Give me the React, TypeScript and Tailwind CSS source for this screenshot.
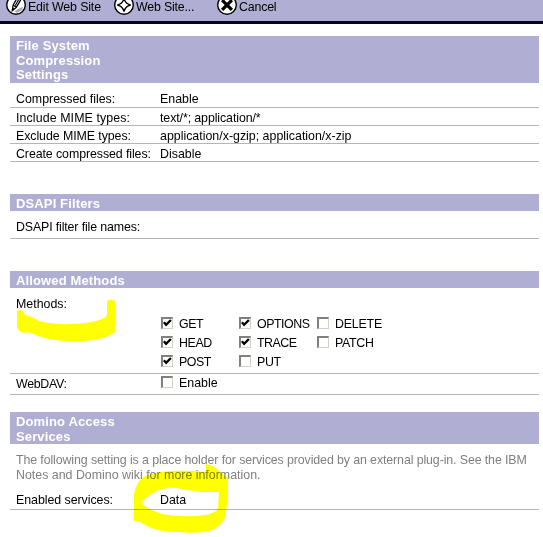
import type { ReactNode } from 'react';

function Header({ children, className }: { children: ReactNode; className: string }) {
  return (
    <div className={`bg-[#b0afd3] pl-[6px] text-[13px] leading-[14.5px] font-bold tracking-[0.13px] text-white ${className}`}>
      {children}
    </div>
  );
}

function Row({
  label,
  children,
  className = 'h-[18px] pt-[3px]',
  labelClass = '',
}: {
  label: string;
  children?: ReactNode;
  className?: string;
  labelClass?: string;
}) {
  return (
    <div className={`flex items-center border-b border-[#b5b5b5] pl-[6px] ${className}`}>
      <div className={`w-[144px] shrink-0 ${labelClass}`}>{label}</div>
      <div>{children}</div>
    </div>
  );
}

function Check({ label, on = false, className = '' }: { label: string; on?: boolean; className?: string }) {
  return (
    <div className="flex h-[19px] items-center gap-[6px]">
      <span className="mb-[3px] ml-px h-[12px] w-[12px] shrink-0 border-t-2 border-r border-b border-l-2 border-t-[#808080] border-r-[#d4d0c8] border-b-[#d4d0c8] border-l-[#808080]">
        {on && (
          <svg viewBox="0 0 9 9" className="block h-[9px] w-[9px]" fill="none">
            <path d="M.8 3.2 3.1 5.8 7.9 1" stroke="#000" strokeWidth="2.4" />
          </svg>
        )}
      </span>
      <span className={className}>{label}</span>
    </div>
  );
}

function PencilIcon() {
  return (
    <svg viewBox="0 0 22 22" className="h-[22px] w-[22px]" fill="none">
      <circle cx="11" cy="11" r="9.3" fill="#fff" stroke="#000" strokeWidth="1.4" />
      <path d="M9.5 17 18 12.5 17.2 16 12 19Z" fill="#aaa" />
      <path d="M12.5 3.5 8.2 11 7.3 16.6l4-3.2 4.4-7.6" fill="#fff" stroke="#000" strokeWidth="1.3" />
      <path d="m8.2 11 3.1 2.2M10.3 11.5l4-7M7.3 16.8l1.2-2.8" stroke="#000" strokeWidth="1.1" />
    </svg>
  );
}

function DiamondIcon() {
  return (
    <svg viewBox="0 0 22 22" className="h-[22px] w-[22px]">
      <circle cx="11" cy="11" r="9.3" fill="#fff" stroke="#000" strokeWidth="1.4" />
      <path d="M11 4.3Q12.2 9.8 17.7 11 12.2 12.2 11 17.7 9.8 12.2 4.3 11 9.8 9.8 11 4.3Z" fill="#fff" stroke="#000" strokeWidth="1.3" />
    </svg>
  );
}

function CancelIcon() {
  return (
    <svg viewBox="0 0 22 22" className="h-[22px] w-[22px]">
      <circle cx="11" cy="11" r="9.3" fill="#fff" stroke="#000" strokeWidth="1.4" />
      <path d="m6.1 6.1 9.8 9.8m0-9.8-9.8 9.8" stroke="#000" strokeWidth="3.2" />
    </svg>
  );
}

function Action({ icon, label, className, labelClass = '' }: { icon: ReactNode; label: string; className: string; labelClass?: string }) {
  return (
    <div className={`flex shrink-0 items-start gap-px ${className}`}>
      <span className="-mt-[6px] h-[22px] overflow-hidden">{icon}</span>
      <span className={`leading-[14px] ${labelClass}`}>{label}</span>
    </div>
  );
}

export default function App() {
  return (
    <div className="relative h-[537px] w-[543px] overflow-hidden bg-white font-['Liberation_Sans',Arial,sans-serif] text-[12.4px] leading-[15px] whitespace-nowrap text-black">
      <div className="flex h-[24px] overflow-hidden border-b-[3px] border-[#05051a] bg-[#b0afd3] pl-[5px]">
        <Action icon={<PencilIcon />} label="Edit Web Site" className="w-[108px]" labelClass="tracking-[-0.15px]" />
        <Action icon={<DiamondIcon />} label="Web Site..." className="w-[103px]" labelClass="tracking-[-0.2px]" />
        <Action icon={<CancelIcon />} label="Cancel" className="" labelClass="tracking-[-0.2px]" />
      </div>

      <main className="mt-[12px] ml-[10px] w-[529px]">
        <Header className="h-[47px] pt-[3px]">File System<br />Compression<br />Settings</Header>
        <Row label="Compressed files:" className="h-[25px] pt-[8px]">Enable</Row>
        <Row label="Include MIME types:" labelClass="tracking-[0.1px]">
          <span className="tracking-[-0.1px]">text/*; application/*</span>
        </Row>
        <Row label="Exclude MIME types:" labelClass="tracking-[-0.08px]">application/x-gzip; application/x-zip</Row>
        <Row label="Create compressed files:" labelClass="tracking-[-0.09px]">Disable</Row>

        <Header className="mt-[32px] h-[17px] pt-[3px]">DSAPI Filters</Header>
        <Row label="DSAPI filter file names:" className="h-[28px] pt-[6px]" labelClass="tracking-[-0.14px]" />

        <Header className="mt-[32px] h-[17px] pt-[3px]">Allowed Methods</Header>
        <div className="h-[86px] border-b border-[#b5b5b5] pt-[9px] pl-[6px]">
          <div className="h-[18px]">Methods:</div>
          <div className="ml-[144px] grid grid-cols-[78px_78px_78px]">
            <Check label="GET" on className="tracking-[-0.4px]" />
            <Check label="OPTIONS" on className="tracking-[-0.45px]" />
            <Check label="DELETE" className="tracking-[-0.2px]" />
            <Check label="HEAD" on className="tracking-[-0.4px]" />
            <Check label="TRACE" on className="tracking-[-0.5px]" />
            <Check label="PATCH" className="tracking-[-0.3px]" />
            <Check label="POST" on className="tracking-[-0.5px]" />
            <Check label="PUT" className="tracking-[-0.3px]" />
          </div>
        </div>
        <Row label="WebDAV:" className="h-[21px] pb-px" labelClass="pt-[2px] tracking-[-0.3px]">
          <Check label="Enable" />
        </Row>

        <Header className="mt-[17px] h-[32px] pt-[3px]">Domino Access<br />Services</Header>
        <p className="mt-[9px] pl-[6px] tracking-[-0.11px] text-[#808080]">
          The following setting is a place holder for services provided by an external plug-in. See the IBM
          <br />
          <span className="tracking-normal">Notes and Domino wiki for more information.</span>
        </p>
        <Row label="Enabled services:" className="h-[27px] pt-[8px]" labelClass="tracking-[-0.05px]">Data</Row>
      </main>

      {/* Highlighter strokes, multiplied over the form */}
      <svg viewBox="0 0 543 537" className="pointer-events-none absolute inset-0 h-[537px] w-[543px] mix-blend-multiply" fill="#ff0">
        <path d="M17 311Q20 309 23 311L25 315Q34 317 39 321 53 325 68 324 91 324 102 319 107 317 107 314V301Q111 298 115 301V332Q109 337 99 339 85 342 67 341 46 340 36 335 28 331 24 333 18 331 17 327Z" />
        <path fillRule="evenodd" d="M134 494Q137 480 145 476 165 468 206 472V464Q216 466 220 472L228 478V499Q226 511 225 517 222 526 210 531 195 534 178 532 160 532 149 527L140 522 134 521ZM141 503Q148 495 159 490 168 487 177 488 192 491 203 492H219L218 509Q215 513 205 515 183 518 162 514 153 511 148 508Z" />
      </svg>
    </div>
  );
}
